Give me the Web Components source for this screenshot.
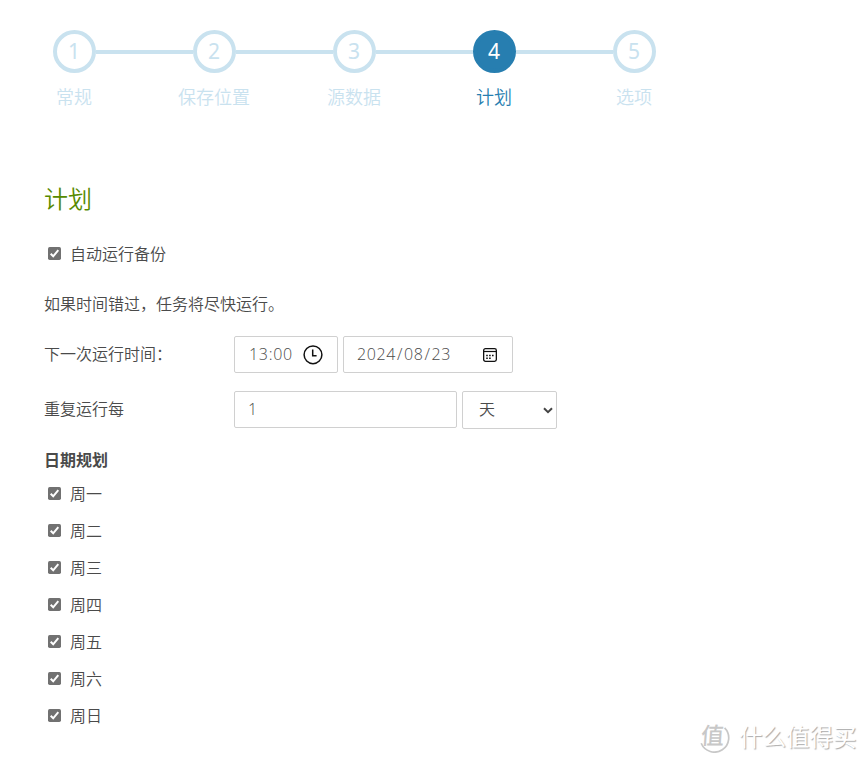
<!DOCTYPE html>
<html lang="zh-CN">
<head>
<meta charset="utf-8">
<title>计划</title>
<style>
  body {
    margin: 0;
    background: #fff;
    color: #4a4a4a;
    font: 350 16px/24px "Noto Sans CJK SC", sans-serif;
  }
</style>
</head>
<body>
<backup-wizard></backup-wizard>

<script>
class WizardStep extends HTMLElement {
  connectedCallback() {
    this.attachShadow({ mode: 'open' });
    this.shadowRoot.innerHTML = `
      <style>
        :host {
          display: block;
          width: 140px;
          color: #c9e2ef;
          text-align: center;
        }
        .track {
          display: grid;
          grid-template-columns: 1fr 43px 1fr;
          align-items: center;
        }
        .line {
          height: 4px;
          margin-top: 1px;
          background: #c9e2ef;
        }
        :host([first]) .before,
        :host([last]) .after {
          visibility: hidden;
        }
        .number {
          box-sizing: border-box;
          width: 43px;
          height: 43px;
          border: 4px solid #c9e2ef;
          border-radius: 50%;
          font: 400 21px/35px "Noto Sans", sans-serif;
        }
        .label {
          margin-top: 9px;
          font-size: 18px;
          line-height: 28px;
        }
        :host([active]) {
          color: #277eb0;
        }
        :host([active]) .number {
          border-color: #277eb0;
          background: #277eb0;
          color: #fff;
        }
      </style>
      <div class="track">
        <span class="line before"></span>
        <span class="number">${this.getAttribute('number')}</span>
        <span class="line after"></span>
      </div>
      <div class="label"><slot></slot></div>
    `;
  }
}
customElements.define('wizard-step', WizardStep);

class CheckItem extends HTMLElement {
  connectedCallback() {
    this.attachShadow({ mode: 'open' });
    this.shadowRoot.innerHTML = `
      <style>
        :host {
          display: flex;
          align-items: center;
          height: 37px;
          padding-left: 4px;
        }
        svg {
          width: 13px;
          height: 13px;
          margin: 0 9px 1px 0;
        }
        span {
          margin-bottom: 2px;
        }
      </style>
      <svg viewBox="0 0 13 13">
        <rect width="13" height="13" rx="1.7" fill="#717171"/>
        <path d="M2.7 6.8 5.2 9.3 10.3 3.2" fill="none" stroke="#fff" stroke-width="2"/>
      </svg>
      <span><slot></slot></span>
    `;
  }
}
customElements.define('check-item', CheckItem);

class FormRow extends HTMLElement {
  connectedCallback() {
    this.attachShadow({ mode: 'open' });
    this.shadowRoot.innerHTML = `
      <style>
        :host {
          display: grid;
          grid-template-columns: 190px auto;
          align-items: start;
          line-height: 35px;
        }
        .fields {
          display: flex;
          gap: 5px;
        }
      </style>
      <span><slot name="label"></slot></span>
      <div class="fields"><slot></slot></div>
    `;
  }
}
customElements.define('form-row', FormRow);

const icons = {
  clock: `<svg width="20" height="20" viewBox="0 0 20 20" fill="none" stroke="#111">
    <circle cx="10" cy="9.8" r="8.9" stroke-width="1.5"/>
    <path d="M9.7 4.6V10.8H13.6" stroke-width="1.5"/></svg>`,
  calendar: `<svg width="14" height="14" viewBox="0 0 14 14" fill="none" stroke="#111">
    <rect x=".65" y=".65" width="12.7" height="12.7" rx="1.8" stroke-width="1.3"/>
    <path d="M1 3.5H13" stroke-width="1.2"/>
    <path d="M3.2 10.3H4.8M6.1 10.3H7.7M3.2 7.4H4.8M6.1 7.4H7.7M9 7.4H10.6" stroke-width="1.5"/></svg>`,
  chevron: `<svg width="10" height="7" viewBox="0 0 10 7" fill="none" stroke="#444">
    <path d="M1 1.3 5 5.2 9 1.3" stroke-width="2"/></svg>`
};

class FieldBox extends HTMLElement {
  connectedCallback() {
    this.attachShadow({ mode: 'open' });
    this.shadowRoot.innerHTML = `
      <style>
        :host {
          box-sizing: border-box;
          display: flex;
          align-items: center;
          justify-content: space-between;
          height: 37px;
          padding: 0 14px 0 13px;
          border: 1px solid #d0d0d0;
          border-radius: 2px;
          font-family: "Open Sans", "Noto Sans CJK SC", sans-serif;
          font-weight: 350;
          line-height: 35px;
          letter-spacing: var(--tracking, 0);
        }
        svg {
          display: block;
        }
      </style>
      <span><slot></slot></span>
      ${icons[this.getAttribute('icon')] || ''}
    `;
  }
}
customElements.define('field-box', FieldBox);

class SiteMark extends HTMLElement {
  connectedCallback() {
    this.attachShadow({ mode: 'open' });
    this.shadowRoot.innerHTML = `
      <style>
        :host {
          position: absolute;
          left: 699px;
          top: 719px;
          display: flex;
          align-items: center;
          gap: 9px;
          color: #fff;
          font-weight: 400;
          font-size: 23.5px;
          line-height: 34px;
          white-space: nowrap;
          text-shadow: 1px 1px 1px #aaa;
        }
        .seal {
          display: grid;
          width: 31px;
          height: 34px;
        }
        .seal > * {
          grid-area: 1 / 1;
        }
        .seal b {
          color: #c8c8c8;
          font-size: 23px;
          font-weight: 500;
          line-height: 31px;
          padding-left: 2px;
          transform: skewX(-4deg);
          text-shadow: none;
        }
      </style>
      <span class="seal">
        <svg width="31" height="34" viewBox="0 0 31 34" fill="none" stroke="#c8c8c8">
          <path d="M25.6 8.8A14.3 14.3 0 1 1 2.2 24.3" stroke-width="1.7"/>
        </svg>
        <b>值</b>
      </span>
      <span>什么值得买</span>
    `;
  }
}
customElements.define('site-mark', SiteMark);

class BackupWizard extends HTMLElement {
  connectedCallback() {
    this.attachShadow({ mode: 'open' });
    const days = ['周一', '周二', '周三', '周四', '周五', '周六', '周日'];
    this.shadowRoot.innerHTML = `
      <style>
        :host {
          position: relative;
          display: block;
          box-sizing: border-box;
          height: 763px;
          overflow: hidden;
        }
        nav {
          display: flex;
          padding: 30px 0 0 4px;
        }
        main {
          padding: 70px 0 0 44px;
        }
        h2 {
          margin: 0;
          color: #578a00;
          font-size: 24px;
          font-weight: 350;
          line-height: 36px;
        }
        .auto {
          margin-top: 19px;
        }
        p {
          margin: 19px 0 21px;
        }
        form-row + form-row {
          margin-top: 18px;
        }
        h3 {
          margin: 18px 0 4px;
          font-size: 16px;
          font-weight: 700;
          line-height: 24px;
        }
        .time {
          width: 104px;
          padding-left: 14px;
          --tracking: 0.7px;
        }
        .date {
          width: 170px;
          padding-right: 15px;
          --tracking: 0.6px;
        }
        .date i {
          margin: 0 1px;
          font-style: normal;
        }
        .count {
          width: 223px;
        }
        .unit {
          width: 95px;
          height: 38px;
          padding: 0 3px 0 16px;
          line-height: 34px;
        }
        .unit span {
          display: block;
          padding-bottom: 2px;
        }
      </style>
      <nav>
        <wizard-step number="1" first>常规</wizard-step>
        <wizard-step number="2">保存位置</wizard-step>
        <wizard-step number="3">源数据</wizard-step>
        <wizard-step number="4" active>计划</wizard-step>
        <wizard-step number="5" last>选项</wizard-step>
      </nav>
      <main>
        <h2>计划</h2>
        <check-item class="auto">自动运行备份</check-item>
        <p>如果时间错过，任务将尽快运行。</p>
        <form-row>
          <span slot="label">下一次运行时间：</span>
          <field-box class="time" icon="clock">13:00</field-box>
          <field-box class="date" icon="calendar">2024<i>/</i>08<i>/</i>23</field-box>
        </form-row>
        <form-row>
          <span slot="label">重复运行每</span>
          <field-box class="count">1</field-box>
          <field-box class="unit" icon="chevron"><span>天</span></field-box>
        </form-row>
        <h3>日期规划</h3>
        ${days.map(day => `<check-item>${day}</check-item>`).join('')}
      </main>
      <site-mark></site-mark>
    `;
  }
}
customElements.define('backup-wizard', BackupWizard);
</script>
</body>
</html>
